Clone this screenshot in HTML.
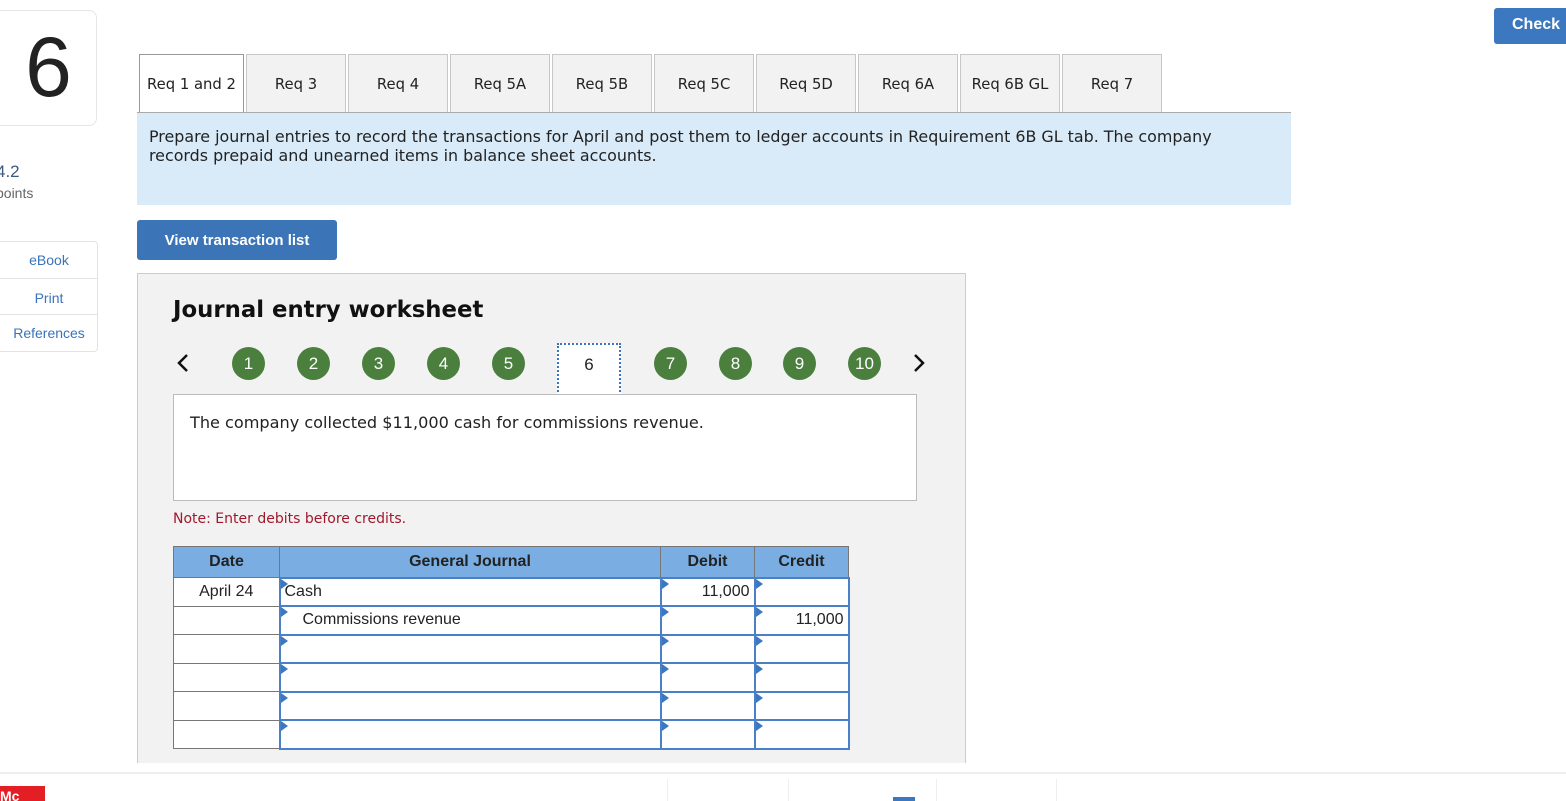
<!DOCTYPE html>
<html><head><meta charset="utf-8"><style>
*{box-sizing:border-box;margin:0;padding:0}
body{width:1566px;height:801px;overflow:hidden;background:#fff;position:relative;font-family:"DejaVu Sans","Liberation Sans",sans-serif;color:#222}
.a{position:absolute}
.qbox{left:-10px;top:10px;width:107px;height:116px;border:1px solid #e6e6e6;border-radius:8px;font-family:"Liberation Sans",sans-serif;font-size:84px;color:#222;text-align:center;line-height:112px;padding-left:10px}
.side{left:-10px;width:108px;border:1px solid #e3e3e3;font-family:"Liberation Sans",sans-serif;font-size:14px;color:#3b73b9;text-align:center;padding-left:10px}
.check{left:1494px;top:8px;width:80px;height:36px;background:#3b78c0;color:#fff;font-family:"Liberation Sans",sans-serif;font-weight:bold;font-size:16px;line-height:34px;padding-left:18px;border-radius:3px}
.tab{top:54px;height:58px;width:100px;background:#f2f2f2;border:1px solid #c8c8c8;border-bottom:none;font-size:14.8px;text-align:center;line-height:60px;color:#222;white-space:nowrap}
.panel{left:137px;top:112px;width:1154px;height:93px;background:#d9ebf9;font-size:15.9px;line-height:19px;padding:14px 40px 14px 12px;color:#222;border-top:1px solid #aaa}
.btn{left:137px;top:220px;width:200px;height:40px;background:#3b75b8;border-radius:3px;color:#fff;font-family:"Liberation Sans",sans-serif;font-weight:bold;font-size:15px;text-align:center;line-height:42px}
.ws{left:137px;top:273px;width:829px;height:500px;background:#f2f2f2;border:1px solid #ccc}
.c{width:33px;height:33px;border-radius:50%;background:#4a7f3e;color:#fff;font-family:"Liberation Sans",sans-serif;font-size:17px;text-align:center;line-height:33px;top:347px}
table{position:absolute;left:173px;top:546px;border-collapse:collapse;font-family:"Liberation Sans",sans-serif;font-size:16px}
td,th{border:1px solid #777;height:28.5px;padding:0 4px}
th{background:#7aaee3;height:31px;font-weight:bold;color:#222}
td{background:#fff}
td.i{border:2px solid #4a80c8;position:relative}
td.i:before{content:"";position:absolute;left:0;top:0;border-left:7px solid #3b78c0;border-top:5px solid transparent;border-bottom:5px solid transparent}
</style></head><body>
<div class="a qbox">6</div>
<div class="a" style="left:-4px;top:162px;font-family:'Liberation Sans',sans-serif;font-size:17px;color:#3a5a80">4.2</div>
<div class="a" style="left:-4px;top:185px;font-family:'Liberation Sans',sans-serif;font-size:14px;color:#666">points</div>
<div class="a side" style="top:241px;height:38px;line-height:36px;border-radius:0 4px 0 0">eBook</div>
<div class="a side" style="top:278px;height:37px;line-height:38px">Print</div>
<div class="a side" style="top:314px;height:38px;line-height:36px;border-radius:0 0 4px 0">References</div>
<div class="a check">Check</div>

<div class="a tab" style="left:139px;width:105px;background:#fff;border-color:#999;height:59px">Req 1 and 2</div>
<div class="a tab" style="left:246px">Req 3</div>
<div class="a tab" style="left:348px">Req 4</div>
<div class="a tab" style="left:450px">Req 5A</div>
<div class="a tab" style="left:552px">Req 5B</div>
<div class="a tab" style="left:654px">Req 5C</div>
<div class="a tab" style="left:756px">Req 5D</div>
<div class="a tab" style="left:858px">Req 6A</div>
<div class="a tab" style="left:960px">Req 6B GL</div>
<div class="a tab" style="left:1062px">Req 7</div>
<div class="a panel">Prepare journal entries to record the transactions for April and post them to ledger accounts in Requirement 6B GL tab. The company records prepaid and unearned items in balance sheet accounts.</div>
<div class="a btn">View transaction list</div>

<div class="a ws"></div>
<div class="a" style="left:173px;top:297px;font-size:22.8px;font-weight:bold;color:#111">Journal entry worksheet</div>
<svg class="a" style="left:176px;top:353px" width="14" height="20"><path d="M11 2 L3 10 L11 18" fill="none" stroke="#111" stroke-width="2.5"/></svg>
<svg class="a" style="left:912px;top:353px" width="14" height="20"><path d="M3 2 L11 10 L3 18" fill="none" stroke="#111" stroke-width="2.5"/></svg>
<div class="a c" style="left:232px">1</div>
<div class="a c" style="left:297px">2</div>
<div class="a c" style="left:362px">3</div>
<div class="a c" style="left:427px">4</div>
<div class="a c" style="left:492px">5</div>
<div class="a" style="left:557px;top:343px;width:64px;height:53px;background:#fff;border:2px dotted #3b75b8;text-align:center;line-height:40px;font-family:'Liberation Sans',sans-serif;font-size:17px">6</div>
<div class="a c" style="left:654px">7</div>
<div class="a c" style="left:719px">8</div>
<div class="a c" style="left:783px">9</div>
<div class="a c" style="left:848px">10</div>
<div class="a" style="left:173px;top:394px;width:744px;height:107px;background:#fff;border:1px solid #bbb;padding:18px 16px;font-size:16.1px">The company collected $11,000 cash for commissions revenue.</div>
<div class="a" style="left:173px;top:511px;font-size:14px;color:#a0182c">Note: Enter debits before credits.</div>

<table>
<tr><th style="width:106px">Date</th><th style="width:381px">General Journal</th><th style="width:94px">Debit</th><th style="width:94px">Credit</th></tr>
<tr><td style="text-align:center">April 24</td><td class="i">Cash</td><td class="i" style="text-align:right">11,000</td><td class="i"></td></tr>
<tr><td></td><td class="i" style="padding-left:22px">Commissions revenue</td><td class="i"></td><td class="i" style="text-align:right">11,000</td></tr>
<tr><td></td><td class="i"></td><td class="i"></td><td class="i"></td></tr>
<tr><td></td><td class="i"></td><td class="i"></td><td class="i"></td></tr>
<tr><td></td><td class="i"></td><td class="i"></td><td class="i"></td></tr>
<tr><td></td><td class="i"></td><td class="i"></td><td class="i"></td></tr>
</table>

<div class="a" style="left:0;top:763px;width:1566px;height:10px;background:#fff"></div>
<div class="a" style="left:0;top:772px;width:1566px;height:2px;background:#eee"></div>
<div class="a" style="left:0;top:786px;width:45px;height:15px;background:#e31e24;color:#fff;font-family:'Liberation Sans',sans-serif;font-weight:bold;font-size:14px;line-height:20px;overflow:hidden">Mc</div>
<div class="a" style="left:667px;top:779px;width:1px;height:22px;background:#eee"></div>
<div class="a" style="left:788px;top:779px;width:1px;height:22px;background:#eee"></div>
<div class="a" style="left:936px;top:779px;width:1px;height:22px;background:#eee"></div>
<div class="a" style="left:1056px;top:779px;width:1px;height:22px;background:#eee"></div>
<div class="a" style="left:893px;top:797px;width:22px;height:4px;background:#3b78c0"></div>
</body></html>
